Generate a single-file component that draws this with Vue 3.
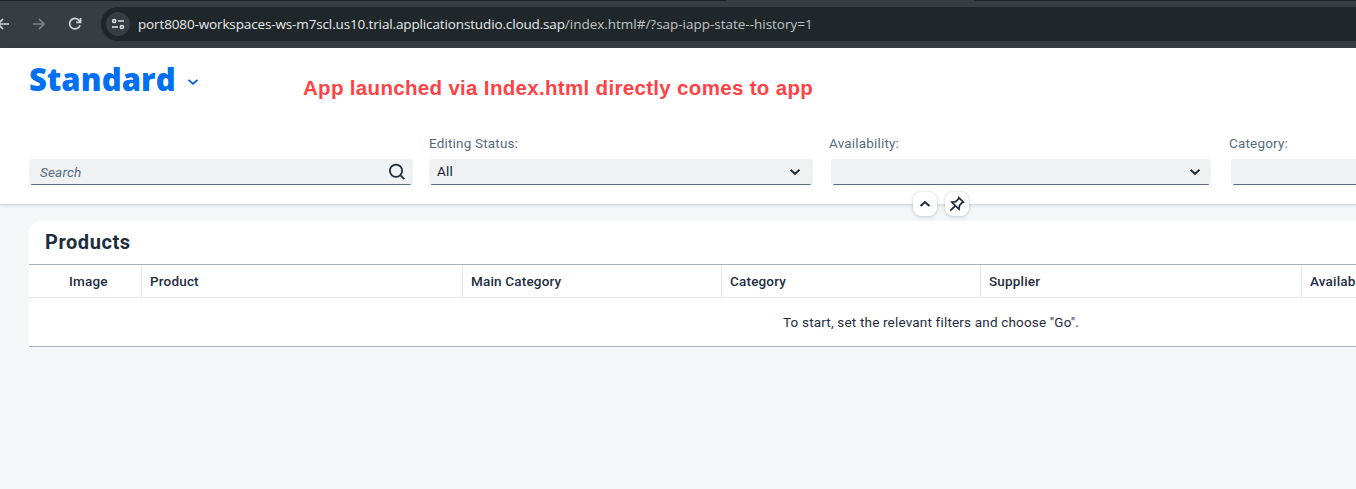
<script setup>
const filters = [
  { label: 'Editing Status:', value: 'All', cls: 'status' },
  { label: 'Availability:', value: '', cls: 'multi avail' },
  { label: 'Category:', value: '', cls: 'multi cat' },
]
const columns = [
  { name: 'Image', cls: 'image' },
  { name: 'Product', cls: 'product' },
  { name: 'Main Category', cls: 'main' },
  { name: 'Category', cls: 'category' },
  { name: 'Supplier', cls: 'supplier' },
  { name: 'Availability', cls: 'availability' },
]
</script>

<template>
  <div class="page">
    <div class="browser">
      <div class="tabs"><span class="tab-left"></span><span class="tab-right"></span></div>
      <svg class="nav back" viewBox="0 0 16 16"><path d="M14 8H3M8 3L3 8l5 5" /></svg>
      <svg class="nav forward" viewBox="0 0 16 16"><path d="M2 8h11M8 3l5 5-5 5" /></svg>
      <svg class="nav reload" viewBox="0 0 16 16"><path d="M13 9.2A5.3 5.3 0 1 1 12.2 4.5L13.5 6M13.6 2v4.4H9.2" /></svg>
      <div class="address">
        <span class="site">
          <svg viewBox="0 0 14 14"><circle cx="3.2" cy="4" r="1.6" /><path d="M7 4h6M1 10h6" /><circle cx="10.9" cy="10" r="1.6" /></svg>
        </span>
        <span class="url"><span class="host">port8080-workspaces-ws-m7scl.us10.trial.applicationstudio.cloud.sap</span><span class="path">/index.html#/?sap-iapp-state--history=1</span></span>
      </div>
    </div>

    <header class="header">
      <div class="title-row">
        <h1>Standard</h1>
        <svg class="variant" viewBox="0 0 12 8"><path d="M1.5 1.8L6 5.8l4.5-4" /></svg>
        <p class="note">App launched via Index.html directly comes to app</p>
      </div>
      <div class="filters">
        <div class="filter">
          <span class="label"></span>
          <div class="field search">
            <span class="placeholder">Search</span>
            <svg class="lens" viewBox="0 0 18 18"><circle cx="8" cy="7.7" r="6.1" /><path d="M12.2 12.2L16.3 16.2" /></svg>
          </div>
        </div>
        <div v-for="f in filters" :key="f.label" class="filter" :class="f.cls">
          <span class="label">{{ f.label }}</span>
          <div class="field">
            <span class="value">{{ f.value }}</span>
            <svg class="arrow" viewBox="0 0 12 8"><path d="M1.5 1.8L6 5.8l4.5-4" /></svg>
          </div>
        </div>
      </div>
      <div class="toggles">
        <button><svg class="up" viewBox="0 0 12 8"><path d="M1.5 6.1L6 2.1l4.5 4" /></svg></button>
        <button><svg class="pin" viewBox="0 0 16 16"><path d="M9.8 1.6L14.4 6.2 12.9 6.8 10.5 9.3 10 13.3 2.8 6.2 6.8 5.6 9.3 3.1ZM6.3 9.8L1.3 14.7" /></svg></button>
      </div>
    </header>

    <main class="card">
      <h2>Products</h2>
      <div class="columns">
        <div v-for="c in columns" :key="c.name" class="column" :class="c.cls"><span>{{ c.name }}</span></div>
      </div>
      <div class="empty"><span>To start, set the relevant filters and choose "Go".</span></div>
    </main>
  </div>
</template>

<style>
body { overflow: hidden; }
</style>

<style scoped>
* { box-sizing: border-box; }
.page { width: 1356px; height: 489px; overflow: hidden; background: #f5f6f7; font-family: Roboto, "Liberation Sans", sans-serif; font-size: 13.5px; letter-spacing: .18px; color: #1d2d3e; white-space: nowrap; }
svg { fill: none; flex: none; display: block; }

.browser { position: relative; height: 48px; display: flex; align-items: center; background: #363e41; }
.tabs { position: absolute; inset: 0 0 auto; height: 1px; display: flex; justify-content: space-between; }
.tab-left { width: 727px; background: #1c2225; border-radius: 0 0 6px 0; }
.tab-right { width: 382px; background: #1c2225; }
.nav { width: 16px; height: 16px; stroke: #d0d4d6; stroke-width: 1.7; }
.back { margin-left: -5px; }
.forward { margin-left: 20px; stroke: #7c8285; }
.reload { margin-left: 20px; }
.address { height: 34px; flex: 1; margin-left: 18px; border-radius: 17px 0 0 17px; background: #1f272a; display: flex; align-items: center; padding-left: 5px; }
.site { width: 24px; height: 24px; border-radius: 50%; background: #363e41; display: grid; place-items: center; }
.site svg { width: 14px; height: 14px; stroke: #dfe3e4; stroke-width: 1.5; }
.url { margin-left: 8px; font: 13.5px/20px "Open Sans", sans-serif; }
.host { color: #e8eaeb; letter-spacing: -0.135px; }
.path { color: #bfc4c6; letter-spacing: -0.02px; }

.header { position: relative; height: 157px; background: #fff; border-bottom: 1px solid #d9d9d9; box-shadow: 0 1px 3px rgba(34, 53, 72, .1); }
.title-row { height: 88px; display: flex; align-items: flex-start; }
h1 { margin: 12px 0 0 29px; width: 158px; font: 800 31px/38px "Open Sans", sans-serif; color: #0070f2; letter-spacing: .1px; }
.variant { width: 12px; height: 8px; margin-top: 30px; stroke: #0057d2; stroke-width: 1.8; }
.note { margin: 28px 0 0 104px; font: bold 20.5px/24px "Liberation Sans", Arial, sans-serif; letter-spacing: .32px; color: #ff4245; }
.filters { display: flex; gap: 16px; padding-left: 29px; }
.filter { width: 384px; flex: none; }
.label { display: block; height: 23px; line-height: 15px; color: #556b82; }
.field { height: 26px; display: flex; align-items: center; justify-content: space-between; padding: 0 12px 1px 8px; border-radius: 4px; background: linear-gradient(#556b82, #556b82) 50% 100% / calc(100% - 4px) 1px no-repeat #eff1f2; }
.multi .field { margin: 0 2px; padding-right: 10px; }
.search { padding-left: 11px; padding-right: 7px; }
.placeholder { font-style: italic; color: #556b82; }
.value { color: #131e29; padding-bottom: 2px; }
.lens { width: 18px; height: 18px; stroke: #1d2d3e; stroke-width: 1.8; }
.arrow, .up { width: 12px; height: 8px; stroke: #1d2d3e; stroke-width: 2; }
.toggles { position: absolute; left: 913px; top: 144px; display: flex; gap: 8px; z-index: 2; }
button { width: 24px; height: 24px; padding: 0; border: 0; border-radius: 8px; background: #fff; display: grid; place-items: center; box-shadow: 0 0 2px rgba(34, 53, 72, .25), 0 2px 4px rgba(34, 53, 72, .1); }
.pin { width: 16px; height: 16px; stroke: #1d2d3e; stroke-width: 1.7; }

.card { width: 1400px; height: 126px; margin: 16px 0 0 29px; background: #fff; border-radius: 12px 0 0 0; border-bottom: 1px solid #a8b3bd; }
h2 { margin: 0; height: 43px; padding-left: 16px; font: 700 20px/42px Roboto, sans-serif; letter-spacing: .55px; }
.columns { height: 34px; display: flex; border-top: 1px solid #a8b3bd; border-bottom: 1px solid #e5e5e5; }
.column { flex: none; padding-left: 8px; border-right: 1px solid #e5e5e5; line-height: 32px; font-weight: 500; }
.image { width: 113px; padding-left: 40px; }
.product, .supplier { width: 321px; }
.main, .category { width: 259px; }
.availability { width: 200px; }
.empty { height: 48px; line-height: 48px; padding-left: 754px; }
</style>
